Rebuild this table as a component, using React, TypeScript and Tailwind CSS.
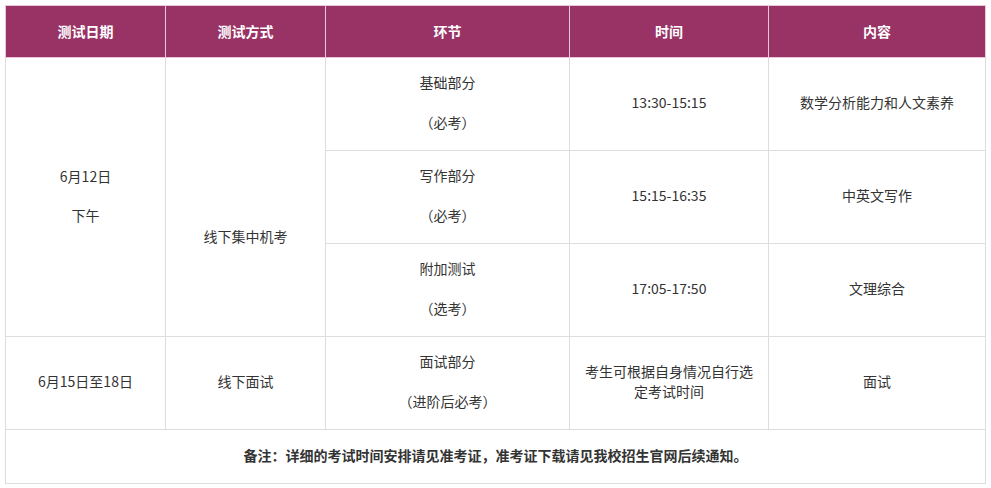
export default function App() {
  const th = "border border-[#e9c7d8] px-2 text-center text-[14px] font-bold text-white";
  const td = "border border-[#dddddd] px-[10px] pb-[4px] text-center align-middle text-[14px] leading-[20px] text-[#333333]";

  return (
    <div
      className="min-h-[488px] bg-white p-[5px] pr-[6px]"
      style={{ fontFamily: '"Noto Sans CJK SC", "Noto Sans", sans-serif' }}
    >
      <table className="w-[980px] table-fixed border-collapse">
        <colgroup>
          <col className="w-[160px]" />
          <col className="w-[160px]" />
          <col className="w-[244px]" />
          <col className="w-[199px]" />
          <col className="w-[217px]" />
        </colgroup>
        <thead>
          <tr className="h-[52px] bg-[#993366]">
            <th className={th}>测试日期</th>
            <th className={th}>测试方式</th>
            <th className={th}>环节</th>
            <th className={th}>时间</th>
            <th className={th}>内容</th>
          </tr>
        </thead>
        <tbody>
          <tr className="h-[93px]">
            <td rowSpan={3} className={td}>
              <p>6月12日</p>
              <p className="mt-[19px]">下午</p>
            </td>
            <td rowSpan={3} className={td}>
              <p className="pt-[82px]">线下集中机考</p>
            </td>
            <td className={td}>
              <p>基础部分</p>
              <p className="mt-[20px]">（必考）</p>
            </td>
            <td className={td}>13:30-15:15</td>
            <td className={td}>数学分析能力和人文素养</td>
          </tr>
          <tr className="h-[93px]">
            <td className={td}>
              <p>写作部分</p>
              <p className="mt-[20px]">（必考）</p>
            </td>
            <td className={td}>15:15-16:35</td>
            <td className={td}>中英文写作</td>
          </tr>
          <tr className="h-[93px]">
            <td className={td}>
              <p>附加测试</p>
              <p className="mt-[20px]">（选考）</p>
            </td>
            <td className={td}>17:05-17:50</td>
            <td className={td}>文理综合</td>
          </tr>
          <tr className="h-[93px]">
            <td className={td}>6月15日至18日</td>
            <td className={td}>线下面试</td>
            <td className={td}>
              <p>面试部分</p>
              <p className="mt-[20px]">（进阶后必考）</p>
            </td>
            <td className={td}>考生可根据自身情况自行选定考试时间</td>
            <td className={td}>面试</td>
          </tr>
          <tr className="h-[54px]">
            <td colSpan={5} className={`${td} font-bold`}>
              备注：详细的考试时间安排请见准考证，准考证下载请见我校招生官网后续通知。
            </td>
          </tr>
        </tbody>
      </table>
    </div>
  );
}
